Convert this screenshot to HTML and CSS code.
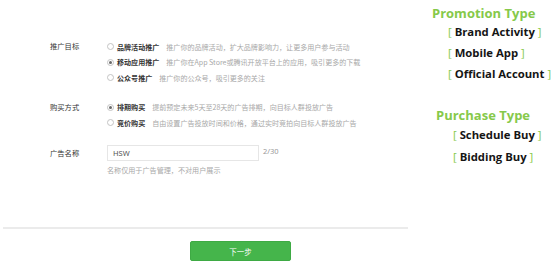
FILE: index.html
```html
<!DOCTYPE html>
<html lang="zh">
<head>
<meta charset="utf-8">
<link rel="stylesheet" href="styles.css">
</head>
<body>
<div class="page">
  <div class="main">
    <div class="form">
      <div class="section">
        <div class="label">推广目标</div>
        <div class="options">
          <div class="opt"><span class="radio"></span><span class="name">品牌活动推广</span><span class="desc">推广你的品牌活动，扩大品牌影响力，让更多用户参与活动</span></div>
          <div class="opt"><span class="radio on"></span><span class="name">移动应用推广</span><span class="desc">推广你在App Store或腾讯开放平台上的应用，吸引更多的下载</span></div>
          <div class="opt"><span class="radio"></span><span class="name">公众号推广</span><span class="desc">推广你的公众号，吸引更多的关注</span></div>
        </div>
      </div>
      <div class="section">
        <div class="label">购买方式</div>
        <div class="options">
          <div class="opt"><span class="radio on"></span><span class="name">排期购买</span><span class="desc">提前预定未来5天至28天的广告排期，向目标人群投放广告</span></div>
          <div class="opt"><span class="radio"></span><span class="name">竞价购买</span><span class="desc">自由设置广告投放时间和价格，通过实时竞拍向目标人群投放广告</span></div>
        </div>
      </div>
      <div class="section name-section">
        <div class="label label-input">广告名称</div>
        <div class="field">
          <div class="input-row">
            <div class="input">HSW</div>
            <span class="count">2/30</span>
          </div>
          <div class="hint">名称仅用于广告管理，不对用户展示</div>
        </div>
      </div>
    </div>
    <div class="divider"></div>
    <div class="actions">
      <button class="next">下一步</button>
    </div>
  </div>
  <div class="notes">
    <div class="title">Promotion Type</div>
    <div class="item item-a"><span class="br">[</span> Brand Activity <span class="br">]</span></div>
    <div class="item item-a"><span class="br">[</span> Mobile App <span class="br">]</span></div>
    <div class="item item-a"><span class="br">[</span> Official Account <span class="br">]</span></div>
    <div class="title title-b">Purchase Type</div>
    <div class="item item-b"><span class="br">[</span> Schedule Buy <span class="br">]</span></div>
    <div class="item item-b"><span class="br">[</span> Bidding Buy <span class="br">]</span></div>
  </div>
</div>
</body>
</html>
```

FILE: styles.css
```css
html, body {
  margin: 0;
  padding: 0;
  background: #fff;
}
body {
  width: 553px;
  height: 264px;
  overflow: hidden;
  font-family: "Noto Sans CJK SC", "Noto Sans", sans-serif;
}
.page {
  display: flex;
  width: 553px;
  height: 264px;
}
.main {
  width: 425px;
  display: flex;
  flex-direction: column;
}
.form {
  box-sizing: border-box;
  padding-top: 39px;
  height: 189px;
  padding-left: 50px;
}
.section {
  display: flex;
  margin-bottom: 14px;
}
.label {
  width: 57px;
  font-size: 7.3px;
  line-height: 15.5px;
  color: #333;
}
.options {
  display: flex;
  flex-direction: column;
}
.opt {
  display: flex;
  align-items: center;
  height: 15.5px;
  font-size: 7.05px;
  white-space: nowrap;
}
.radio {
  width: 5px;
  height: 5px;
  border: 1px solid #c4c4c4;
  border-radius: 50%;
  margin-right: 3px;
  display: flex;
  align-items: center;
  justify-content: center;
}
.radio.on::after {
  content: "";
  width: 3px;
  height: 3px;
  border-radius: 50%;
  background: #6a6a6a;
}
.name {
  color: #333;
  font-weight: 700;
  margin-right: 7px;
}
.desc {
  color: #a8a8a8;
}
.label-input {
  line-height: 16px;
}
.field {
  display: flex;
  flex-direction: column;
}
.input-row {
  display: flex;
  align-items: flex-start;
}
.input {
  width: 145px;
  height: 14px;
  border: 1px solid #e6e6e6;
  padding-left: 5px;
  font-size: 7.5px;
  line-height: 14px;
  color: #555;
  font-family: "Noto Sans", sans-serif;
}
.count {
  margin-left: 4px;
  font-size: 7.5px;
  line-height: 12px;
  color: #999;
  font-family: "Noto Sans", sans-serif;
}
.hint {
  margin-top: 3px;
  font-size: 7.1px;
  line-height: 12px;
  color: #a8a8a8;
}
.divider {
  margin-top: 38px;
  margin-left: 3px;
  width: 405px;
  height: 2px;
  background: #ebebeb;
}
.actions {
  padding-top: 12px;
  padding-left: 190px;
}
.next {
  display: block;
  width: 101px;
  height: 20px;
  border: 1px solid #3eaa44;
  border-radius: 2px;
  background: #45b54b;
  color: #fff;
  font-size: 7.5px;
  font-family: "Noto Sans CJK SC", sans-serif;
  padding: 0;
  margin: 0;
}
.notes {
  flex: 1;
  display: flex;
  flex-direction: column;
  font-family: "Open Sans", sans-serif;
  font-weight: 700;
}
.title {
  color: #86c94a;
  font-size: 13px;
  line-height: 18px;
  margin-top: 4px;
  margin-left: 7px;
}
.title-b {
  margin-top: 22px;
  margin-left: 11px;
}
.item {
  color: #151515;
  font-size: 11.3px;
  line-height: 21px;
  white-space: pre;
}
.item-a {
  margin-left: 23px;
}
.item-b {
  margin-left: 28px;
  line-height: 22px;
}
.br {
  color: #86c94a;
  font-weight: 400;
}
.title + .item {
  margin-top: -1px;
}
.title-b + .item {
  margin-top: 0;
}
```
